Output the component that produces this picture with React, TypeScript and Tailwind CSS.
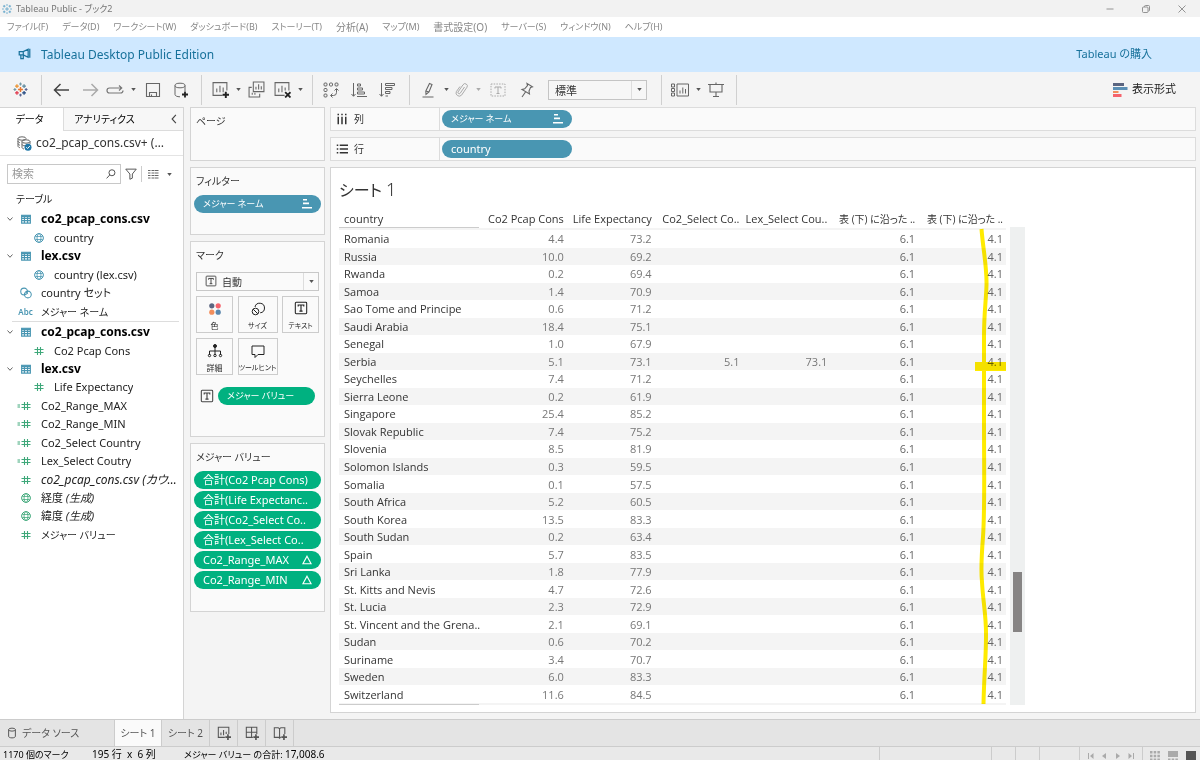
import type { ReactNode } from 'react';

const MENUS = [
  { label: 'ファイル(F)' },
  { label: 'データ(D)' },
  { label: 'ワークシート(W)' },
  { label: 'ダッシュボード(B)' },
  { label: 'ストーリー(T)' },
  { label: '分析(A)', kanji: true },
  { label: 'マップ(M)' },
  { label: '書式設定(O)', kanji: true },
  { label: 'サーバー(S)' },
  { label: 'ウィンドウ(N)' },
  { label: 'ヘルプ(H)' },
];

type FieldIcon = 'table' | 'globe' | 'set' | 'abc' | 'hash' | 'calc';

type Field = {
  icon: FieldIcon;
  label: string;
  kind?: 'group' | 'child' | 'italic' | 'generated' | 'kana';
  green?: boolean;
};

const DIMENSIONS: Field[] = [
  { icon: 'table', label: 'co2_pcap_cons.csv', kind: 'group' },
  { icon: 'globe', label: 'country', kind: 'child' },
  { icon: 'table', label: 'lex.csv', kind: 'group' },
  { icon: 'globe', label: 'country (lex.csv)', kind: 'child' },
  { icon: 'set', label: 'country セット' },
  { icon: 'abc', label: 'メジャー ネーム', kind: 'kana' },
];

const MEASURES: Field[] = [
  { icon: 'table', label: 'co2_pcap_cons.csv', kind: 'group' },
  { icon: 'hash', label: 'Co2 Pcap Cons', kind: 'child', green: true },
  { icon: 'table', label: 'lex.csv', kind: 'group' },
  { icon: 'hash', label: 'Life Expectancy', kind: 'child', green: true },
  { icon: 'calc', label: 'Co2_Range_MAX', green: true },
  { icon: 'calc', label: 'Co2_Range_MIN', green: true },
  { icon: 'calc', label: 'Co2_Select Country', green: true },
  { icon: 'calc', label: 'Lex_Select Coutry', green: true },
  { icon: 'hash', label: 'co2_pcap_cons.csv (カウ…', kind: 'italic', green: true },
  { icon: 'globe', label: '経度', kind: 'generated', green: true },
  { icon: 'globe', label: '緯度', kind: 'generated', green: true },
  { icon: 'hash', label: 'メジャー バリュー', kind: 'kana', green: true },
];

const HEADERS = [
  'Co2 Pcap Cons',
  'Life Expectancy',
  'Co2_Select Co..',
  'Lex_Select Cou..',
  '表 (下) に沿った ..',
  '表 (下) に沿った ..',
];

const ROWS: string[][] = [
  ['Romania', '4.4', '73.2'],
  ['Russia', '10.0', '69.2'],
  ['Rwanda', '0.2', '69.4'],
  ['Samoa', '1.4', '70.9'],
  ['Sao Tome and Principe', '0.6', '71.2'],
  ['Saudi Arabia', '18.4', '75.1'],
  ['Senegal', '1.0', '67.9'],
  ['Serbia', '5.1', '73.1', '5.1', '73.1'],
  ['Seychelles', '7.4', '71.2'],
  ['Sierra Leone', '0.2', '61.9'],
  ['Singapore', '25.4', '85.2'],
  ['Slovak Republic', '7.4', '75.2'],
  ['Slovenia', '8.5', '81.9'],
  ['Solomon Islands', '0.3', '59.5'],
  ['Somalia', '0.1', '57.5'],
  ['South Africa', '5.2', '60.5'],
  ['South Korea', '13.5', '83.3'],
  ['South Sudan', '0.2', '63.4'],
  ['Spain', '5.7', '83.5'],
  ['Sri Lanka', '1.8', '77.9'],
  ['St. Kitts and Nevis', '4.7', '72.6'],
  ['St. Lucia', '2.3', '72.9'],
  ['St. Vincent and the Grena..', '2.1', '69.1'],
  ['Sudan', '0.6', '70.2'],
  ['Suriname', '3.4', '70.7'],
  ['Sweden', '6.0', '83.3'],
  ['Switzerland', '11.6', '84.5'],
];

const VALUES = [
  { label: '合計(Co2 Pcap Cons)' },
  { label: '合計(Life Expectanc..' },
  { label: '合計(Co2_Select Co..' },
  { label: '合計(Lex_Select Co..' },
  { label: 'Co2_Range_MAX', delta: true },
  { label: 'Co2_Range_MIN', delta: true },
];

// Small stroke icon on a 16 unit grid
function Icon({ children, className = 'size-4' }: { children: ReactNode; className?: string }) {
  return (
    <svg viewBox="0 0 16 16" className={`shrink-0 ${className}`} fill="none" stroke="currentColor" aria-hidden="true">
      {children}
    </svg>
  );
}

function Caret({ className = 'text-[#555]' }: { className?: string }) {
  return (
    <svg viewBox="0 0 6 4" className={`h-[3px] w-[5px] shrink-0 ${className}`} fill="currentColor" aria-hidden="true">
      <path d="M0 0h6L3 4z" />
    </svg>
  );
}

function TableauLogo({ className = 'size-4' }: { className?: string }) {
  return (
    <Icon className={className}>
      <path d="M8 5.4v5.2M5.4 8h5.2" stroke="#e8762c" strokeWidth="1.5" />
      <path d="M4.2 2.4v4M2.2 4.4h4" stroke="#eb912c" strokeWidth="1.3" />
      <path d="M11.8 2.4v4M9.8 4.4h4" stroke="#59879b" strokeWidth="1.3" />
      <path d="M4.2 9.6v4M2.2 11.6h4" stroke="#e0354a" strokeWidth="1.3" />
      <path d="M11.8 9.6v4M9.8 11.6h4" stroke="#1f457e" strokeWidth="1.3" />
      <path d="M8 .6v3M6.5 2.1h3" stroke="#7199a6" strokeWidth="1.2" />
      <path d="M8 12.4v3M6.5 13.900h3M14 6.500v3M12.500 8h3" stroke="#5b6591" strokeWidth="1.2" />
      <path d="M2 6.500v3M.5 8h3" stroke="#7199a6" strokeWidth="1.2" />
    </Icon>
  );
}

function TextMark({ className = 'size-4' }: { className?: string }) {
  return (
    <Icon className={className}>
      <rect x="1.500" y="1.500" width="13" height="13" rx="1" strokeWidth="1.200" />
      <path d="M4.800 6.300V4.600h6.400v1.700M8 4.600v7M6.200 11.600h3.600" strokeWidth="1.300" />
    </Icon>
  );
}

function SortMark() {
  return (
    <svg viewBox="0 0 10 10" className="size-2.5 shrink-0" fill="currentColor" aria-hidden="true">
      <path d="M1 0h4v1.600H1zM1 3.600h6v1.600H1zM0 8h10v1.600H0z" />
    </svg>
  );
}

function ToolButton({ label, className = 'w-7', children }: { label: string; className?: string; children: ReactNode }) {
  return (
    <button type="button" aria-label={label} className={`flex h-7 shrink-0 items-center justify-center ${className}`}>
      {children}
    </button>
  );
}

function Separator({ className = '' }: { className?: string }) {
  return <span className={`h-[30px] w-px shrink-0 bg-[#d0d0d0] ${className}`} />;
}

function Toolbar() {
  return (
    <div className="flex h-[35px] shrink-0 items-center bg-[#f4f4f4] text-[#666]">
      <ToolButton label="スタート" className="w-[41px]">
        <TableauLogo className="size-[15px]" />
      </ToolButton>
      <Separator className="mr-px" />
      <ToolButton label="元に戻す" className="w-9">
        <Icon className="size-4 text-[#444]">
          <path d="M7.500 2 1.500 8l6 6M1.500 8H16" strokeWidth="1.500" />
        </Icon>
      </ToolButton>
      <ToolButton label="やり直す" className="w-6">
        <Icon className="size-4 text-[#aaa]">
          <path d="m8.500 2 6 6-6 6M14.500 8H0" strokeWidth="1.500" />
        </Icon>
      </ToolButton>
      <ToolButton label="アニメーションの再生" className="w-6">
        <svg viewBox="0 0 18 12" className="h-3 w-[18px] text-[#777]" fill="none" stroke="currentColor" aria-hidden="true">
          <path d="M15.500 4H3.500a2.500 2.500 0 0 0 0 5h11a2.500 2.500 0 0 0 2.500-2.500M13 1.500 15.700 4 13 6.500" strokeWidth="1.200" />
        </svg>
      </ToolButton>
      <ToolButton label="再生オプション" className="w-3"><Caret /></ToolButton>
      <ToolButton label="保存">
        <Icon>
          <path d="M1.500 1.500h13v13h-13zM4.500 14.500v-4h7v4M6.500 12.500v2" strokeWidth="1.100" />
        </Icon>
      </ToolButton>
      <ToolButton label="新しいデータ ソース">
        <Icon>
          <ellipse cx="7" cy="3.500" rx="5" ry="2.300" />
          <path d="M2 3.500v9c0 1.300 2 2.300 5 2.300M12 3.500V9" />
          <path d="M12 9.500v6M9 12.500h6" stroke="#222" strokeWidth="1.800" />
        </Icon>
      </ToolButton>
      <Separator className="ml-1.5" />
      <ToolButton label="新しいワークシート" className="ml-1 w-7">
        <Icon className="size-[17px]">
          <path d="M10 13.500H1V1.500h13V9M4.500 10.500V7M7.500 10.500V4.500M10.500 10.500V6" />
          <path d="M13 10v6M10 13h6" stroke="#222" strokeWidth="1.800" />
        </Icon>
      </ToolButton>
      <ToolButton label="新規作成メニュー" className="w-2"><Caret /></ToolButton>
      <ToolButton label="複製">
        <Icon className="size-[17px]">
          <path d="M5 1h10v9H5zM7.500 8V5.500M10 8V3M12.500 8V5" />
          <path d="M3.500 6H1v9h10v-3M4 13v-2M6.500 13v-2" />
        </Icon>
      </ToolButton>
      <ToolButton label="シートのクリア" className="w-6">
        <Icon className="size-[17px]">
          <path d="M10 13.500H1V1.500h13V9M4.500 10.500V7M7.500 10.500V4.500M10.500 9V6" />
          <path d="m10.500 10.500 5 5M15.500 10.500l-5 5" stroke="#222" strokeWidth="1.700" />
        </Icon>
      </ToolButton>
      <ToolButton label="クリア メニュー" className="w-3"><Caret /></ToolButton>
      <Separator className="ml-1.5" />
      <ToolButton label="行と列の交換" className="ml-1 w-7">
        <Icon>
          <rect x="1" y="1" width="3" height="3" rx="1" />
          <rect x="6.500" y="1" width="3" height="3" rx="1" />
          <rect x="12" y="1" width="3" height="3" rx="1" />
          <rect x="1" y="6.500" width="3" height="3" rx="1" />
          <rect x="1" y="12" width="3" height="3" rx="1" />
          <path d="M13.500 7v3.500a3 3 0 0 1-3 3H8M11.500 8.500l2-2 2 2M9.500 11.500l-2 2 2 2" />
        </Icon>
      </ToolButton>
      <ToolButton label="昇順で並べ替え">
        <Icon>
          <path d="M2.500 1v13M.5 12l2 2.300 2-2.300M6.500 2h3v2h-3zM6.500 6h5v2h-5zM6.500 10h7v2h-7zM6 14.500h10" />
        </Icon>
      </ToolButton>
      <ToolButton label="降順で並べ替え">
        <Icon>
          <path d="M2.500 1v13M.5 12l2 2.300 2-2.300M6.500 1.500h9v2h-9zM6.500 5.500h6.500v2H6.500zM6.500 9.500H11v2H6.500zM6.500 14h2.500" />
        </Icon>
      </ToolButton>
      <Separator className="ml-2" />
      <ToolButton label="ハイライト" className="ml-1 w-7">
        <Icon>
          <path d="M9.500 1.500 12 2.500 9 10l-3 2.500L5.800 9zM5.800 9 9 10M2.500 15h11" strokeWidth="1.100" />
        </Icon>
      </ToolButton>
      <ToolButton label="ハイライト メニュー" className="w-2"><Caret /></ToolButton>
      <ToolButton label="グループ" className="w-6">
        <Icon className="size-4 text-[#aaa]">
          <path d="M10.500 5 6 11.500a1.300 1.300 0 0 1-2-1.500l5-7.200a2.300 2.300 0 0 1 4 2.400l-5.500 8a3.200 3.200 0 0 1-5.200-3.500L6 4.500" />
        </Icon>
      </ToolButton>
      <ToolButton label="グループ メニュー" className="w-2"><Caret className="text-[#aaa]" /></ToolButton>
      <ToolButton label="マーク ラベルの表示" className="w-8">
        <Icon className="size-4 text-[#aaa]">
          <rect x="1" y="2" width="14" height="12" strokeDasharray="1.500 1.200" />
          <path d="M5 6.500V5h6v1.500M8 5v6.500M6.500 11.500h3" />
        </Icon>
      </ToolButton>
      <ToolButton label="軸の固定" className="w-6">
        <Icon>
          <path d="m9 1.500 5.500 3.300-2 .7L11 9l.5 3L4 7.500l2.700-.7L9.500 3.500zM7.500 10 4 15" strokeWidth="1.100" />
        </Icon>
      </ToolButton>
      <div className="relative ml-2.5 h-5 w-[99px] shrink-0 border border-[#c4c4c4] bg-[#f6f6f6]">
        <select aria-label="表示サイズ" className="block h-[18px] w-full appearance-none pl-1.5 font-['Noto_Sans_CJK_JP',sans-serif] text-[11px] leading-[16px] text-[#333] outline-none">
          <option>標準</option>
        </select>
        <span className="pointer-events-none absolute inset-y-0 right-0 flex w-[15px] items-center justify-center border-l border-[#ddd]">
          <Caret />
        </span>
      </div>
      <Separator className="ml-3.5" />
      <ToolButton label="カードの表示/非表示" className="ml-1 w-7">
        <svg viewBox="0 0 18 14" className="h-3.5 w-[18px]" fill="none" stroke="currentColor" aria-hidden="true">
          <path d="M.5 1h3v3h-3zM.5 5.500h3v3h-3zM.5 10h3v3h-3zM6 1h11.500v12H6zM9 10.500V7.500M11.800 10.500v-6M14.500 10.500V6" />
        </svg>
      </ToolButton>
      <ToolButton label="カード メニュー" className="w-2"><Caret /></ToolButton>
      <ToolButton label="プレゼンテーション モード">
        <Icon>
          <path d="M0 2.500h16M2 2.500v7.500h12V2.500M8 10v4.500M5 14.500h6M8 .5v2" strokeWidth="1.100" />
        </Icon>
      </ToolButton>
      <Separator className="ml-1.5" />
      <button type="button" className="mr-6 ml-auto flex shrink-0 items-center gap-1 text-[11px] text-[#222]">
        <svg viewBox="0 0 15 14" className="h-3.5 w-[15px]" aria-hidden="true">
          <path d="M0 0h11v3H0z" fill="#5b6580" />
          <path d="M0 4h14.500v3H0z" fill="#5b8fb5" />
          <path d="M0 8h5.500v2H0z" fill="#f28e5c" />
          <path d="M0 11h8.500v3H0z" fill="#f5636c" />
        </svg>
        表示形式
      </button>
    </div>
  );
}

function FieldGlyph({ icon }: { icon: FieldIcon }) {
  if (icon === 'table') {
    return (
      <Icon className="size-2.5">
        <path d="M1 2h14v12.500H1zM1 7h14M1 10.500h14M5.500 4v10M10.500 4v10" strokeWidth="1.800" />
        <path d="M1 3.500h14" strokeWidth="3" />
      </Icon>
    );
  }
  if (icon === 'globe') {
    return (
      <Icon className="size-2.5">
        <circle cx="8" cy="8" r="7" strokeWidth="1.600" />
        <ellipse cx="8" cy="8" rx="3.200" ry="7" strokeWidth="1.300" />
        <path d="M2 5.500h12M2 10.500h12" strokeWidth="1.300" />
      </Icon>
    );
  }
  if (icon === 'set') {
    return (
      <Icon className="size-3">
        <circle cx="5.500" cy="6" r="4.500" strokeWidth="1.400" />
        <circle cx="10.500" cy="10" r="4.500" strokeWidth="1.400" />
        <path d="m6 8 2 2.500M8 6.500 10.500 9.500" strokeWidth="1.200" />
      </Icon>
    );
  }
  if (icon === 'abc') {
    return <span className="text-[8px] font-semibold">Abc</span>;
  }
  return (
    <svg
      viewBox={icon === 'calc' ? '-6 0 16 10' : '0 0 10 10'}
      className={icon === 'calc' ? 'mr-1.5 h-2.5 w-4 shrink-0' : 'size-2.5 shrink-0'}
      fill="none"
      stroke="currentColor"
      aria-hidden="true"
    >
      <path d="M3.500 1v8M6.500 1v8M.5 3.500h9M.5 6.500h9" strokeWidth="1.100" />
      {icon === 'calc' && <path d="M-3.500 4h2.500M-3.500 6h2.500" />}
    </svg>
  );
}

const LABEL_STYLES = {
  group: 'text-[12px] font-bold text-black',
  child: 'text-[11px]',
  italic: 'text-[12px] italic',
  generated: 'text-[11px]',
  kana: 'text-[10px]',
  plain: 'text-[11px]',
};

function FieldRow({ field }: { field: Field }) {
  const group = field.kind === 'group';
  const child = field.kind === 'child';
  return (
    <li className={`flex items-center ${child ? 'pl-[29px]' : 'pl-1.5'}`}>
      {!child && (
        <span className="flex w-2.5 shrink-0 items-center text-[#555]">
          {group && (
            <Icon className="size-2">
              <path d="m3 5 5 5.500L13 5" strokeWidth="1.800" />
            </Icon>
          )}
        </span>
      )}
      <span className={`flex w-[19px] shrink-0 items-center justify-center ${field.green ? 'text-[#3fa87a]' : 'text-[#4996b2]'}`}>
        <FieldGlyph icon={field.icon} />
      </span>
      <span className={`ml-1.5 truncate leading-[18px] ${LABEL_STYLES[field.kind ?? 'plain']}`}>
        {field.label}
        {field.kind === 'generated' && <i> (生成)</i>}
      </span>
    </li>
  );
}

function DataPane() {
  return (
    <aside className="flex w-[184px] shrink-0 flex-col border-t border-r border-[#d4d4d4] bg-white text-[11px] text-[#222]">
      <div className="flex h-[23px] shrink-0 text-[10px] text-black">
        <button type="button" className="w-[63px] pr-1">データ</button>
        <button
          type="button"
          className="flex flex-1 items-center justify-between border-b border-l border-[#dcdcdc] bg-[#f7f7f7] pr-1 pl-2.5"
        >
          アナリティクス
          <Icon className="size-2.5 text-[#444]">
            <path d="M11 1.500 5 8l6 6.500" strokeWidth="1.800" />
          </Icon>
        </button>
      </div>
      <button type="button" className="flex h-[25px] shrink-0 items-center border-b border-[#e4e4e4] pl-[17px] text-[12px] text-[#333]">
        <svg viewBox="0 0 15 15" className="size-[15px] shrink-0" fill="none" stroke="#666" aria-hidden="true">
          <ellipse cx="5" cy="2.500" rx="4" ry="1.700" />
          <path d="M1 2.500V10c0 1 1 1.500 2 1.700M1 5c0 1 1 1.500 2 1.700M1 7.500c0 1 1 1.500 2 1.700" />
          <ellipse cx="9" cy="5.500" rx="4" ry="1.700" />
          <path d="M5 5.500v6c0 .6.800 1.200 2 1.500M5 8.500c.5 1 1.500 1.300 3 1.300M13 5.500V8" />
          <circle cx="11" cy="11.200" r="3.500" fill="#1f77a8" stroke="none" />
          <path d="m9.300 11.200 1.300 1.300 2.200-2.400" stroke="#fff" />
        </svg>
        <span className="ml-1 truncate">co2_pcap_cons.csv+ (…</span>
      </button>
      <div className="mt-2 flex h-5 shrink-0 items-center px-[7px]">
        <label className="flex h-5 w-[114px] items-center border border-[#c8c8c8] pr-1 pl-1">
          <input type="text" placeholder="検索" aria-label="検索" className="min-w-0 flex-1 outline-none placeholder:text-[#999]" />
          <Icon className="size-2.5 text-[#555]">
            <circle cx="9.500" cy="6" r="4.800" strokeWidth="1.600" />
            <path d="M6 9.500 1 15" strokeWidth="1.600" />
          </Icon>
        </label>
        <button type="button" aria-label="フィルター" className="ml-1 text-[#555]">
          <Icon className="size-3">
            <path d="M1 1.500h14L9.800 8v5.500L6.500 15V8z" strokeWidth="1.300" />
          </Icon>
        </button>
        <span className="ml-1 h-4 w-px bg-[#ccc]" />
        <button type="button" aria-label="表示方法" className="ml-1.5 flex items-center gap-2 text-[#666]">
          <svg viewBox="0 0 11 9" className="h-[9px] w-[11px]" stroke="currentColor" fill="none" aria-hidden="true">
            <path d="M0 .5h2.500M0 3h2.500M0 5.500h2.500M0 8h2.500M3.500.5H11M3.500 3H11M3.500 5.500H11M3.500 8H11" strokeDasharray="3 .5" />
          </svg>
          <Caret />
        </button>
      </div>
      <h2 className="mt-1.5 pl-4 text-[10px] leading-[18px]">テーブル</h2>
      <ul className="mt-0.5 grid h-[111px] shrink-0 auto-rows-fr">
        {DIMENSIONS.map((field) => (
          <FieldRow key={field.label} field={field} />
        ))}
      </ul>
      <hr className="mr-1 ml-3 border-[#ddd]" />
      <ul className="mt-px grid h-[221px] shrink-0 auto-rows-fr">
        {MEASURES.map((field) => (
          <FieldRow key={field.label} field={field} />
        ))}
      </ul>
    </aside>
  );
}

function Card({ title, className = '', children }: { title: string; className?: string; children?: ReactNode }) {
  return (
    <section className={`shrink-0 border border-[#d4d4d4] bg-[#fafafa] px-[3px] pt-1 ${className}`}>
      <h2 className="pl-0.5 text-[10px] leading-[18px] text-[#333]">{title}</h2>
      {children}
    </section>
  );
}

function MarkButton({ label, className = 'text-[7px]', children }: { label: string; className?: string; children: ReactNode }) {
  return (
    <button
      type="button"
      className={`flex h-[37px] flex-col items-center justify-between border border-[#ccc] bg-[#fafafa] pt-1 leading-3 whitespace-nowrap text-[#222] ${className}`}
    >
      {children}
      <span>{label}</span>
    </button>
  );
}

function Shelves() {
  return (
    <div className="flex w-[135px] shrink-0 flex-col gap-1.5">
      <Card title="ページ" className="h-[54px]" />
      <Card title="フィルター" className="h-[68px]">
        <button type="button" className="mt-[5px] flex h-[18px] w-full items-center justify-between rounded-full bg-[#4996b2] px-[9px] text-[9px] text-white">
          メジャー ネーム
          <SortMark />
        </button>
      </Card>
      <Card title="マーク" className="h-[196px]">
        <div className="px-0.5">
          <div className="relative mt-2 h-[19px] border border-[#c8c8c8] bg-[#fafafa]">
            <TextMark className="pointer-events-none absolute top-0.5 left-2 size-3 text-[#444]" />
            <select aria-label="マーク タイプ" className="block h-[17px] w-full appearance-none pl-[25px] font-['Noto_Sans_CJK_JP',sans-serif] text-[10px] leading-[15px] text-[#333] outline-none">
              <option>自動</option>
            </select>
            <span className="pointer-events-none absolute inset-y-0 right-0 flex w-[15px] items-center justify-center border-l border-[#ddd]">
              <Caret />
            </span>
          </div>
          <div className="mt-[5px] grid grid-cols-[37px_40px_37px] justify-between gap-y-[5px]">
            <MarkButton label="色" className="text-[8px]">
              <svg viewBox="0 0 12 12" className="mt-0.5 size-3" aria-hidden="true">
                <circle cx="2.800" cy="2.800" r="2.600" fill="#5b6580" />
                <circle cx="9.200" cy="2.800" r="2.600" fill="#f5636c" />
                <circle cx="2.800" cy="9.200" r="2.600" fill="#f28e5c" />
                <circle cx="9.200" cy="9.200" r="2.600" fill="#5b87ad" />
              </svg>
            </MarkButton>
            <MarkButton label="サイズ">
              <Icon>
                <path d="M5 6a4.800 4.800 0 1 1 5.200 5.800" />
                <circle cx="5.500" cy="10.500" r="3.300" />
                <path d="m3.200 8.200 4.600 4.600" />
              </Icon>
            </MarkButton>
            <MarkButton label="テキスト">
              <TextMark className="size-3.5" />
            </MarkButton>
            <MarkButton label="詳細" className="text-[8px]">
              <Icon>
                <path d="M8 3v5M2.500 12V8h11v4M8 8v4" />
                <circle cx="8" cy="3" r="1.500" fill="currentColor" />
                <circle cx="2.500" cy="12.500" r="1.200" />
                <circle cx="8" cy="12.500" r="1.200" />
                <circle cx="13.500" cy="12.500" r="1.200" />
              </Icon>
            </MarkButton>
            <MarkButton label="ツールヒント">
              <Icon>
                <path d="M2 3h12v8.500H8L5 14.500v-3H2z" />
              </Icon>
            </MarkButton>
          </div>
          <div className="mt-3 flex items-center gap-1 px-1">
            <TextMark className="size-3.5 text-[#444]" />
            <button type="button" className="h-[18px] w-[97px] rounded-full bg-[#00b180] px-[9px] text-left text-[9px] leading-[18px] text-white">
              メジャー バリュー
            </button>
          </div>
        </div>
      </Card>
      <Card title="メジャー バリュー" className="h-[169px]">
        <div className="mt-[5px] flex flex-col gap-0.5">
          {VALUES.map((value) => (
            <button
              key={value.label}
              type="button"
              className="flex h-[18px] items-center justify-between rounded-full bg-[#00b180] px-[9px] text-[11px] whitespace-nowrap text-white"
            >
              {value.label}
              {value.delta && (
                <Icon className="size-2.5">
                  <path d="M8 2 14.500 14h-13z" strokeWidth="1.800" />
                </Icon>
              )}
            </button>
          ))}
        </div>
      </Card>
    </div>
  );
}

function Shelf({ title, icon, children }: { title: string; icon: ReactNode; children: ReactNode }) {
  return (
    <div className="flex h-6 shrink-0 border border-[#dcdcdc] bg-[#fafafa]">
      <div className="flex w-[109px] shrink-0 items-center gap-1.5 border-r border-[#dcdcdc] pl-[5px] text-[10px] text-[#333]">
        {icon}
        {title}
      </div>
      <div className="flex items-center pl-0.5">{children}</div>
    </div>
  );
}

// Hand-drawn marker over the last column
function Highlight() {
  return (
    <svg viewBox="0 0 34 478" className="pointer-events-none absolute right-0 bottom-0 h-[478px] w-[34px] mix-blend-multiply" fill="none" stroke="#ffeb00" aria-hidden="true">
      <path d="M9.500 2C11 22 15 40 14.500 58C14 75 12 85 12 110V190C12 250 13 280 11 310C9 335 9 345 10 355C11 375 14.500 390 14 410C14 430 12 450 11.500 477" strokeWidth="4" />
      <path d="M3 139.500h31" strokeWidth="9" />
    </svg>
  );
}

function Sheet() {
  return (
    <section className="flex min-h-0 flex-1 flex-col border border-[#d4d4d4] bg-white pb-[7px] pl-2">
      <h1 className="mt-1.5 text-[16px] leading-[30px] text-[#333]">
        シート <span className="text-[18px] font-light">1</span>
      </h1>
      <div className="flex min-h-0 flex-1">
        <div className="relative mt-[5px] flex w-[667px]">
          <table className="flex w-full flex-col font-['Open_Sans','Noto_Sans_CJK_JP',sans-serif] text-[11px]">
            <thead className="block">
              <tr className="grid h-[18px] grid-cols-[140px_repeat(6,minmax(0,1fr))] items-center">
                <th className="pl-[5px] text-left font-medium text-[#333]">country</th>
                {HEADERS.map((header, i) => (
                  <th
                    key={i}
                    className={`pr-[3px] text-right whitespace-nowrap text-[#333] ${i > 3 ? 'text-[10px] font-normal' : 'font-medium'}`}
                  >
                    {header}
                  </th>
                ))}
              </tr>
            </thead>
            <tbody className="grid min-h-0 flex-1 auto-rows-fr border-y-2 border-[#f4f4f4]">
              {ROWS.map((row) => (
                <tr key={row[0]} className="grid grid-cols-[140px_repeat(6,minmax(0,1fr))] items-center leading-none even:bg-[#f4f4f4]">
                  <th className="pl-[5px] text-left font-medium whitespace-nowrap text-[#333]">{row[0]}</th>
                  {[1, 2, 3, 4].map((col) => (
                    <td key={col} className="pr-[3px] text-right text-[#777]">{row[col]}</td>
                  ))}
                  <td className="pr-[3px] text-right text-[#666]">6.1</td>
                  <td className="pr-[3px] text-right text-[#666]">4.1</td>
                </tr>
              ))}
            </tbody>
          </table>
          <span className="absolute top-[17px] left-0 h-px w-[140px] bg-[#ccc]" />
          <span className="absolute bottom-0 left-0 h-px w-[140px] bg-[#ccc]" />
          <Highlight />
        </div>
        <div className="mt-[22px] ml-1 w-[15px] bg-[#eef0f0] px-[3px]">
          <div className="mt-[345px] h-[60px] bg-[#868484]" />
        </div>
      </div>
    </section>
  );
}

function TabBar() {
  const icon = 'flex w-7 items-center justify-center border-r border-[#ccc] text-[#555]';
  return (
    <div className="flex h-[27px] shrink-0 border-t border-[#ccc] bg-[#e4e4e4] text-[10px] text-[#555]">
      <button type="button" className="flex w-[115px] items-center gap-1 border-r border-[#ccc] pl-1.5">
        <Icon className="size-3">
          <ellipse cx="8" cy="3.500" rx="4.500" ry="2" strokeWidth="1.300" />
          <path d="M3.500 3.500v9c0 1.200 2 2 4.500 2s4.500-.8 4.500-2v-9" strokeWidth="1.300" />
        </Icon>
        データ ソース
      </button>
      <button type="button" className="w-[47px] border-r border-[#ccc] bg-[#fafafa]">シート 1</button>
      <button type="button" className="w-12 border-r border-[#ccc]">シート 2</button>
      <button type="button" aria-label="新しいワークシート" className={icon}>
        <Icon className="size-3.5">
          <path d="M9 13H1.500V1.500h12V9M4.500 10.500V7.500M7.500 10.500V4.500M10.500 9V6.500" strokeWidth="1.200" />
          <path d="M12.500 9.500V16M9.500 12.800H16" strokeWidth="1.900" />
        </Icon>
      </button>
      <button type="button" aria-label="新しいダッシュボード" className={icon}>
        <Icon className="size-3.5">
          <path d="M9 13H1.500V1.500h12V9M1.500 7.200h12M7.500 1.500V13" strokeWidth="1.200" />
          <path d="M12.500 9.500V16M9.500 12.800H16" strokeWidth="1.900" />
        </Icon>
      </button>
      <button type="button" aria-label="新しいストーリー" className={icon}>
        <Icon className="size-3.5">
          <path d="M9 13H8.500l-1 1-1-1h-5V2H6l1.500 1L9 2h4.500v7M7.500 3v11" strokeWidth="1.200" />
          <path d="M12.500 9.500V16M9.500 12.800H16" strokeWidth="1.900" />
        </Icon>
      </button>
    </div>
  );
}

function StatusBar() {
  return (
    <footer className="flex h-3.5 shrink-0 border-t border-[#ccc] bg-[#e9e9e9] pl-[3px] text-[9px] whitespace-nowrap text-black">
      <span className="w-[89px] pt-0.5 leading-[11px]">1170 個のマーク</span>
      <span className="w-[92px] pt-0.5 text-[10px] leading-[11px] whitespace-pre">195 行  x  6 列</span>
      <span className="pt-0.5 leading-[11px]">
        メジャー バリュー の合計: <span className="text-[10px]">17,008.6</span>
      </span>
      <span className="ml-auto w-[112px] border-l border-[#ccc]" />
      <span className="w-6 border-l border-[#ccc]" />
      <span className="w-6 border-l border-[#ccc]" />
      <span className="w-10 border-l border-[#ccc]" />
      <span className="flex w-[63px] items-center justify-around border-l border-[#ccc] px-1 pt-1 text-[#aaa]">
        <svg viewBox="0 0 6 6" className="size-1.5" fill="currentColor" aria-hidden="true"><path d="M0 0h1v6H0zM5.500 0v6L2 3z" /></svg>
        <svg viewBox="0 0 6 6" className="size-1.5" fill="currentColor" aria-hidden="true"><path d="M5 0v6L1 3z" /></svg>
        <svg viewBox="0 0 6 6" className="size-1.5" fill="currentColor" aria-hidden="true"><path d="M1 0v6l4-3z" /></svg>
        <svg viewBox="0 0 6 6" className="size-1.5" fill="currentColor" aria-hidden="true"><path d="M5 0h1v6H5zM.5 0v6L4 3z" /></svg>
      </span>
      <span className="flex w-[58px] items-center justify-between border-l border-[#ccc] pt-1 pr-1 pl-[7px]">
        <svg viewBox="0 0 10 10" className="size-2.5" fill="#aaa" aria-hidden="true">
          <path d="M0 0h2.500v2.500H0zM3.700 0h2.500v2.500H3.700zM7.400 0h2.500v2.500H7.400zM0 3.700h2.500v2.500H0zM3.700 3.700h2.500v2.500H3.700zM7.400 3.700h2.500v2.500H7.400zM0 7.400h2.500v2.500H0zM3.700 7.400h2.500v2.500H3.700zM7.400 7.400h2.500v2.500H7.400z" />
        </svg>
        <svg viewBox="0 0 10 10" className="size-2.5" fill="#aaa" aria-hidden="true">
          <path d="M0 0h10v6H0zM0 7.400h2.500v2.500H0zM3.700 7.400h2.500v2.500H3.700zM7.400 7.400h2.500v2.500H7.400z" />
        </svg>
        <svg viewBox="0 0 10 10" className="size-2.5" fill="#555" aria-hidden="true"><path d="M0 0h10v10H0z" /></svg>
      </span>
    </footer>
  );
}

export default function App() {
  return (
    <div className="flex h-screen flex-col overflow-hidden bg-[#f4f4f4] font-['Noto_Sans','Noto_Sans_CJK_JP',sans-serif] [font-feature-settings:'palt']">
      <header className="flex h-[17px] shrink-0 items-center bg-[#f2f2f2] pl-0.5 text-[9px] text-[#777]">
        <Icon className="size-2.5 text-[#5ba3c9]">
          <path d="M8 5v6M5 8h6M8 0v3M8 13v3M0 8h3M13 8h3M3.500 1.500v4M1.500 3.500h4M12.500 1.500v4M10.500 3.500h4M3.500 10.500v4M1.500 12.500h4M12.500 10.500v4M10.500 12.500h4" strokeWidth="1.300" />
        </Icon>
        <span className="ml-1">Tableau Public - ブック2</span>
        <div className="mr-3.5 ml-auto flex items-center gap-7 text-[#888]">
          <button type="button" aria-label="最小化">
            <Icon className="size-2"><path d="M1 8h14" strokeWidth="1.800" /></Icon>
          </button>
          <button type="button" aria-label="元に戻す (縮小)">
            <Icon className="size-2">
              <path d="M5 4V3a2 2 0 0 1 2-2h6a2 2 0 0 1 2 2v7a2 2 0 0 1-2 2" strokeWidth="1.800" />
              <rect x="1" y="4" width="11" height="11" rx="2" strokeWidth="1.800" />
            </Icon>
          </button>
          <button type="button" aria-label="閉じる">
            <Icon className="size-2"><path d="m1 1 14 14M15 1 1 15" strokeWidth="1.800" /></Icon>
          </button>
        </div>
      </header>
      <nav className="flex h-5 shrink-0 items-center gap-3.5 bg-white pl-[7px] text-[9px] text-[#888]">
        {MENUS.map((menu) => (
          <button key={menu.label} type="button" className={`shrink-0 ${menu.kanji ? 'text-[10px]' : ''}`}>
            {menu.label}
          </button>
        ))}
      </nav>
      <div className="flex h-[35px] shrink-0 items-center bg-[#cfe8ff] pr-12 pl-[18px] text-[12px] text-[#17719b]">
        <Icon className="size-[13px]">
          <path d="M1.500 4.500h5l6-3v10l-6-3h-5zM6.500 4.500v4M3.500 8.500v4.500h3V8.500M14.500 1v11" strokeWidth="1.500" />
        </Icon>
        <span className="ml-2.5">Tableau Desktop Public Edition</span>
        <a href="#buy" className="ml-auto text-[11px]">Tableau の購入</a>
      </div>
      <Toolbar />
      <main className="flex min-h-0 flex-1">
        <DataPane />
        <div className="flex min-w-0 flex-1 gap-[5px] pr-1 pb-1.5 pl-1.5">
          <Shelves />
          <div className="flex min-w-0 flex-1 flex-col gap-1.5">
            <Shelf
              title="列"
              icon={
                <Icon className="size-3">
                  <path d="M3 5v10M8 5v10M13 5v10M3 1v2M8 1v2M13 1v2" strokeWidth="2" />
                </Icon>
              }
            >
              <button type="button" className="flex h-[18px] w-[130px] items-center justify-between rounded-full bg-[#4996b2] px-[9px] text-[9px] text-white">
                メジャー ネーム
                <SortMark />
              </button>
            </Shelf>
            <Shelf
              title="行"
              icon={
                <Icon className="size-3">
                  <path d="M5 3h11M5 8h11M5 13h11M1 3h2M1 8h2M1 13h2" strokeWidth="2" />
                </Icon>
              }
            >
              <button type="button" className="h-[18px] w-[130px] rounded-full bg-[#4996b2] px-[9px] text-left text-[11px] leading-[18px] text-white">
                country
              </button>
            </Shelf>
            <Sheet />
          </div>
        </div>
      </main>
      <TabBar />
      <StatusBar />
    </div>
  );
}
